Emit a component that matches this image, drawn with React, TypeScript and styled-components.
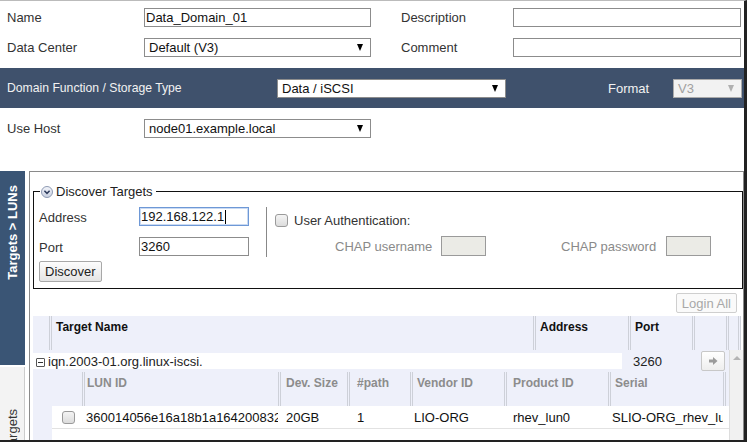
import React from "react";
import styled, { createGlobalStyle } from "styled-components";

const GlobalStyle = createGlobalStyle`
  html, body {
    margin: 0;
    padding: 0;
    background: #fff;
  }
  body {
    font-family: "Liberation Sans", Arial, sans-serif;
    font-size: 13px;
    color: #333;
  }
  * { box-sizing: border-box; }
`;

const Dialog = styled.div`
  width: 747px;
  height: 442px;
  overflow: hidden;
  border-top: 1px solid #bbb;
  border-right: 3px solid #222;
  border-bottom: 2px solid #222;
  display: flex;
  flex-direction: column;
`;

const FormGrid = styled.div`
  display: grid;
  grid-template-columns: 137px 227px 30px 112px 228px;
  grid-auto-rows: 19px;
  row-gap: 11px;
  padding: 7px 0 0 7px;
`;

const Label = styled.label<{ $col?: number }>`
  display: flex;
  align-items: center;
  grid-column: ${(p) => p.$col ?? "auto"};
  white-space: nowrap;
`;

const TextBox = styled.div<{ $focus?: boolean; $disabled?: boolean }>`
  height: ${(p) => (p.$disabled ? 20 : 19)}px;
  border: 1px solid ${(p) => (p.$focus ? "#6e98d6" : p.$disabled ? "#9a9a9a" : "#8c8c8c")};
  box-shadow: ${(p) => (p.$focus ? "inset 0 0 0 1px #c9daf3" : "none")};
  background: ${(p) => (p.$disabled ? "#ebebe6" : "#fff")};
  color: #111;
  display: flex;
  align-items: center;
  padding-left: 1px;
  font-size: 13px;
`;

const Caret = styled.span`
  display: inline-block;
  width: 1px;
  height: 14px;
  background: #000;
  margin-left: 1px;
`;

const Select = styled.div<{ $disabled?: boolean }>`
  height: 19px;
  border: 1px solid ${(p) => (p.$disabled ? "#aaa" : "#8c8c8c")};
  background: ${(p) => (p.$disabled ? "#f2f2f2" : "#fff")};
  color: ${(p) => (p.$disabled ? "#a0a0a0" : "#111")};
  display: flex;
  align-items: center;
  justify-content: space-between;
  padding: 0 7px 0 4px;
  font-size: 13px;
`;

const Arrow = styled.span<{ $disabled?: boolean }>`
  width: 0;
  height: 0;
  border-left: 3.5px solid transparent;
  border-right: 3.5px solid transparent;
  border-top: 7px solid ${(p) => (p.$disabled ? "#b0b0b0" : "#000")};
`;

const Band = styled.div`
  margin-top: 11px;
  height: 40px;
  background: #3f516c;
  color: #f2f2f2;
  display: grid;
  grid-template-columns: 270px 229px 102px 65px 69px;
  align-items: center;
  padding-left: 7px;
`;

const BandLabel = styled.span<{ $narrow?: boolean }>`
  white-space: nowrap;
  font-size: ${(p) => (p.$narrow ? "12.2px" : "13px")};
`;

const HostRow = styled.div`
  display: grid;
  grid-template-columns: 137px 227px;
  height: 19px;
  margin-top: 11px;
  padding-left: 7px;
`;

const TabArea = styled.div`
  margin-top: 33px;
  flex: 1;
  display: flex;
  min-height: 0;
`;

const TabColumn = styled.div`
  width: 29px;
  display: flex;
  flex-direction: column;
`;

const Tab = styled.div<{ $active?: boolean }>`
  width: 25px;
  height: ${(p) => (p.$active ? "194px" : "auto")};
  flex: ${(p) => (p.$active ? "none" : 1)};
  margin-top: ${(p) => (p.$active ? 0 : 2)}px;
  background: ${(p) => (p.$active ? "#3a5575" : "#f3f3f3")};
  border-right: ${(p) => (p.$active ? "none" : "1px solid #ccc")};
  color: ${(p) => (p.$active ? "#fff" : "#333")};
  font-weight: ${(p) => (p.$active ? 700 : 400)};
  display: flex;
  align-items: flex-start;
  justify-content: center;
  overflow: hidden;
`;

const TabText = styled.span<{ $offset?: number }>`
  writing-mode: vertical-rl;
  transform: rotate(180deg);
  white-space: nowrap;
  font-size: 13px;
  margin-top: ${(p) => p.$offset ?? 0}px;
`;

const Panel = styled.div`
  flex: 1;
  border-left: 1px solid #8a8a8a;
  border-top: 1px solid #8a8a8a;
  border-right: 1px solid #8a8a8a;
  padding: 12px 0 0 3px;
  display: flex;
  flex-direction: column;
  min-width: 0;
`;

const Fieldset = styled.fieldset`
  margin: 0;
  border: 1px solid #111;
  padding: 2px 0 6px 5px;
  height: 105px;
  display: flex;
`;

const Legend = styled.legend`
  padding: 0 3px 0 1px;
  margin-left: 1px;
  display: flex;
  align-items: center;
  gap: 3px;
  color: #222;
`;

const DiscoverCol = styled.div`
  display: grid;
  grid-template-columns: 100px 110px;
  grid-auto-rows: 20px;
  row-gap: 10px;
  align-content: start;
  padding-top: 6px;
  width: 227px;
`;

const PlainButton = styled.button<{ $disabled?: boolean }>`
  font-family: "Liberation Sans", Arial, sans-serif;
  font-size: 13px;
  height: 21px;
  padding: 0 5px;
  border: 1px solid ${(p) => (p.$disabled ? "#cfcfcf" : "#a8a8a8")};
  border-radius: 2px;
  background: ${(p) =>
    p.$disabled ? "#fafafa" : "linear-gradient(#fdfdfd, #e4e4e4)"};
  color: ${(p) => (p.$disabled ? "#a8a8a8" : "#222")};
  margin-top: -6px;
  justify-self: start;
`;

const Divider = styled.div`
  width: 1px;
  background: #888;
  margin: 6px 10px 30px 0;
`;

const AuthCol = styled.div`
  display: flex;
  flex-direction: column;
  padding-top: 12px;
`;

const CheckRow = styled.div`
  display: flex;
  align-items: center;
  gap: 6px;
  margin-left: -2px;
`;

const Check = styled.span`
  display: inline-block;
  width: 13px;
  height: 13px;
  border: 1px solid #9a9a9a;
  border-radius: 3px;
  background: linear-gradient(#f4f4f4, #dcdcdc);
`;

const ChapRow = styled.div`
  display: grid;
  grid-template-columns: 106px 45px 75px 105px 45px;
  align-items: center;
  margin-top: 8px;
  padding-left: 58px;
  color: #8a8a8a;
`;

const ToolRow = styled.div`
  display: flex;
  justify-content: flex-end;
  padding: 4px 6px 0 0;
  height: 27px;
  & > button { margin-top: 0; height: 20px; }
`;

const HeaderRow = styled.div`
  display: grid;
  grid-template-columns: 16px 484px 95px 64px 34px 12px 1fr;
  height: 34px;
  background: #eef0fa;
  margin-right: 3px;
`;

const HeadCell = styled.div<{ $sep?: boolean; $muted?: boolean; $pad?: number }>`
  border-left: ${(p) => (p.$sep ? "3px double #cdd0d8" : "none")};
  font-weight: 700;
  color: ${(p) => (p.$muted ? "#8c8c8c" : "#111")};
  padding: 4px 0 0 ${(p) => p.$pad ?? 4}px;
  white-space: nowrap;
  overflow: hidden;
  font-size: 12px;
`;

const BodyArea = styled.div`
  flex: 1;
  display: flex;
  min-height: 0;
`;

const BodyMain = styled.div`
  flex: 1;
  background: #eef0fa;
  display: flex;
  flex-direction: column;
  min-width: 0;
`;

const GroupRow = styled.div`
  display: grid;
  grid-template-columns: 589px 75px 30px;
  height: 22px;
  align-items: center;
`;

const GroupName = styled.div`
  background: #fff;
  height: 16px;
  display: flex;
  align-items: center;
  gap: 3px;
  padding-left: 3px;
  color: #222;
`;

const MinusBox = styled.span`
  display: inline-block;
  position: relative;
  width: 9px;
  height: 9px;
  border: 1px solid #555;
  border-radius: 1px;
  margin-top: 2px;
  &::after {
    content: "";
    position: absolute;
    left: 1px;
    right: 1px;
    top: 3px;
    height: 1px;
    background: #333;
  }
`;

const PortCell = styled.div`
  padding-left: 11px;
  color: #222;
`;

const ArrowBtn = styled.div`
  width: 24px;
  height: 20px;
  border: 1px solid #c8c8c8;
  border-radius: 2px;
  background: linear-gradient(#fff, #eee);
  display: flex;
  align-items: center;
  justify-content: center;
  justify-self: end;
  margin-right: 2px;
`;

const SubTable = styled.div`
  margin-left: 19px;
  background: #fff;
  display: flex;
  flex-direction: column;
`;

const lunGrid = "30px 196px 69px 63px 94px 104px 115px 1fr";

const SubHeader = styled.div`
  display: grid;
  grid-template-columns: ${lunGrid};
  height: 34px;
  background: #eef0fa;
`;

const SubRow = styled.div`
  display: grid;
  grid-template-columns: ${lunGrid};
  height: 23px;
  align-items: center;
  border-bottom: 1px solid #e2e2e2;
  background: #fff;
`;

const Cell = styled.div<{ $pad?: number }>`
  padding-left: ${(p) => p.$pad ?? 4}px;
  padding-right: 2px;
  white-space: nowrap;
  overflow: hidden;
  color: #111;
`;

const CheckCell = styled.div`
  display: flex;
  justify-content: center;
  padding-left: 3px;
`;

const Filler = styled.div`
  flex: 1;
  background: #fff;
  margin-left: 19px;
`;

const Scrollbar = styled.div`
  width: 14px;
  background: #f1f1f1;
  border-left: 1px solid #ddd;
  display: flex;
  justify-content: center;
  padding-top: 6px;
`;

const ScrollArrow = styled.span`
  width: 0;
  height: 0;
  border-left: 4px solid transparent;
  border-right: 4px solid transparent;
  border-bottom: 4px solid #b5b5b5;
`;

const ChevronCircle = () => (
  <svg width="12" height="12" viewBox="0 0 12 12">
    <defs>
      <linearGradient id="cc" x1="0" y1="0" x2="0" y2="1">
        <stop offset="0" stopColor="#f4f6fb" />
        <stop offset="1" stopColor="#c7cfe0" />
      </linearGradient>
    </defs>
    <circle cx="6" cy="6" r="5.5" fill="url(#cc)" stroke="#8e9ab3" />
    <path d="M3.4 4.8 L6 7.4 L8.6 4.8" fill="none" stroke="#2d3b5c" strokeWidth="1.5" />
  </svg>
);

const RightArrow = () => (
  <svg width="10" height="10" viewBox="0 0 10 10">
    <path d="M1 3.5 H5 V1 L9.5 5 L5 9 V6.5 H1 Z" fill="#9b9b9b" />
  </svg>
);

// header label, header padding, data value, data padding
const lunCols: [string, number, string, number][] = [
  ["LUN ID", 2, "360014056e16a18b1a164200832", 1],
  ["Dev. Size", 5, "20GB", 5],
  ["#path", 7, "1", 7],
  ["Vendor ID", 4, "LIO-ORG", 1],
  ["Product ID", 6, "rhev_lun0", 6],
  ["Serial", 4, "SLIO-ORG_rhev_lun0", 1],
];

export default function App() {
  return (
    <>
      <GlobalStyle />
      <Dialog>
        <FormGrid>
          <Label>Name</Label>
          <TextBox>Data_Domain_01</TextBox>
          <Label $col={4}>Description</Label>
          <TextBox />
          <Label>Data Center</Label>
          <Select>
            <span>Default (V3)</span>
            <Arrow />
          </Select>
          <Label $col={4}>Comment</Label>
          <TextBox />
        </FormGrid>

        <Band>
          <BandLabel $narrow>Domain Function / Storage Type</BandLabel>
          <Select>
            <span>Data / iSCSI</span>
            <Arrow />
          </Select>
          <span />
          <BandLabel>Format</BandLabel>
          <Select $disabled>
            <span>V3</span>
            <Arrow $disabled />
          </Select>
        </Band>

        <HostRow>
          <Label>Use Host</Label>
          <Select>
            <span>node01.example.local</span>
            <Arrow />
          </Select>
        </HostRow>

        <TabArea>
          <TabColumn>
            <Tab $active>
              <TabText $offset={14}>Targets &gt; LUNs</TabText>
            </Tab>
            <Tab>
              <TabText $offset={42}>Targets</TabText>
            </Tab>
          </TabColumn>

          <Panel>
            <Fieldset>
              <Legend>
                <ChevronCircle />
                Discover Targets
              </Legend>
              <DiscoverCol>
                <Label>Address</Label>
                <TextBox $focus>
                  192.168.122.1
                  <Caret />
                </TextBox>
                <Label>Port</Label>
                <TextBox>3260</TextBox>
                <PlainButton>Discover</PlainButton>
              </DiscoverCol>
              <Divider />
              <AuthCol>
                <CheckRow>
                  <Check />
                  <span>User Authentication:</span>
                </CheckRow>
                <ChapRow>
                  <span>CHAP username</span>
                  <TextBox $disabled />
                  <span />
                  <span>CHAP password</span>
                  <TextBox $disabled />
                </ChapRow>
              </AuthCol>
            </Fieldset>

            <ToolRow>
              <PlainButton $disabled>Login All</PlainButton>
            </ToolRow>

            <HeaderRow>
              <HeadCell />
              <HeadCell $sep>Target Name</HeadCell>
              <HeadCell $sep>Address</HeadCell>
              <HeadCell $sep>Port</HeadCell>
              <HeadCell $sep />
              <HeadCell $sep />
              <HeadCell $sep />
            </HeaderRow>

            <BodyArea>
              <BodyMain>
                <GroupRow>
                  <GroupName>
                    <MinusBox />
                    iqn.2003-01.org.linux-iscsi.
                  </GroupName>
                  <PortCell>3260</PortCell>
                  <ArrowBtn>
                    <RightArrow />
                  </ArrowBtn>
                </GroupRow>
                <SubTable>
                  <SubHeader>
                    <HeadCell />
                    {lunCols.map(([h, hp]) => (
                      <HeadCell key={h} $sep $muted $pad={hp}>
                        {h}
                      </HeadCell>
                    ))}
                    <HeadCell $sep />
                  </SubHeader>
                  <SubRow>
                    <CheckCell>
                      <Check />
                    </CheckCell>
                    {lunCols.map(([h, , v, vp]) => (
                      <Cell key={h} $pad={vp + 3}>
                        {v}
                      </Cell>
                    ))}
                    <Cell />
                  </SubRow>
                </SubTable>
                <Filler />
              </BodyMain>
              <Scrollbar>
                <ScrollArrow />
              </Scrollbar>
            </BodyArea>
          </Panel>
        </TabArea>
      </Dialog>
    </>
  );
}
